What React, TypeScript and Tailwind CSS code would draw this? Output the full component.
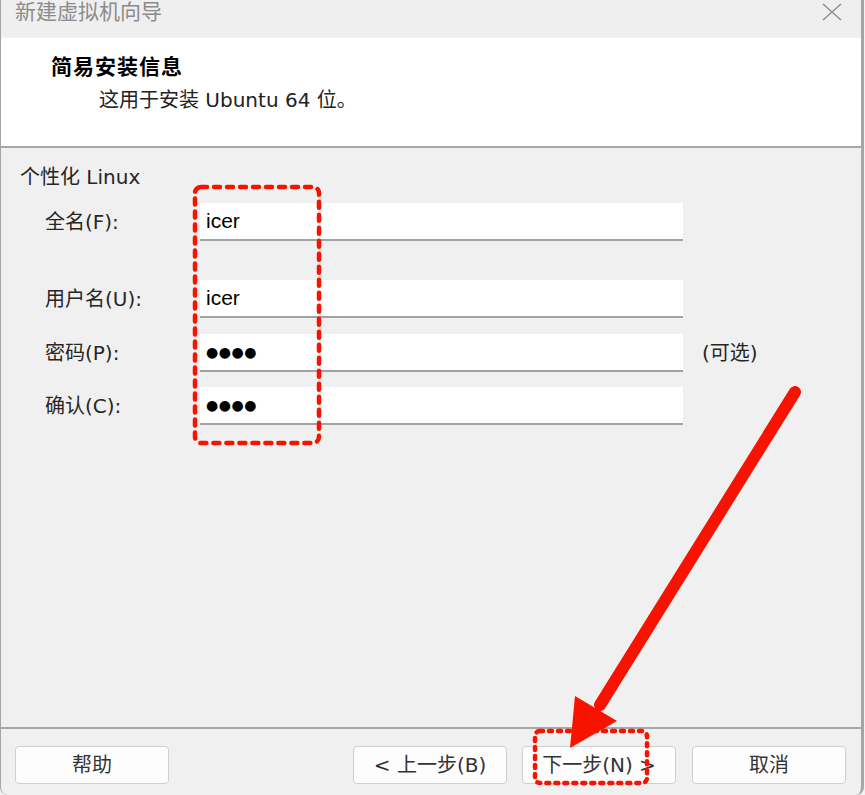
const SANS = { fontFamily: '"DejaVu Sans", "Noto Sans CJK SC", sans-serif' };

function Field({ label, value, masked, hint, className }: { label: string; value: string; masked?: boolean; hint?: string; className?: string }) {
  return (
    <div className={`flex items-center ${className ?? ""}`}>
      <span className="w-[180px] pl-[25px] text-[20px] leading-[26px] text-[#262626]">{label}</span>
      <div className="w-[483px] h-[38px] bg-white border-b-2 border-[#a2a2a2] flex items-center pl-[6px]">
        {masked ? (
          <span className="text-[14px] tracking-[0.5px] text-black">{value}</span>
        ) : (
          <span className="text-[21px] text-black" style={{ fontFamily: '"Liberation Sans", sans-serif' }}>
            {value}
          </span>
        )}
      </div>
      {hint && <span className="ml-[19px] text-[20px] text-[#262626]">{hint}</span>}
    </div>
  );
}

function Btn({ text }: { text: string }) {
  return (
    <button className="w-[154px] h-[38px] bg-[#fdfdfd] border border-[#cfcfcf] rounded-[4px] text-[20px] text-[#333] flex items-center justify-center">
      {text}
    </button>
  );
}

export default function App() {
  return (
    <div className="relative w-[865px] h-[795px] bg-[#f0f0f0]" style={SANS}>
      <div className="flex flex-col h-full w-[864px] border-l border-r-[3px] border-[#a5a5a5] rounded-b-[8px] bg-[#f0f0f0] overflow-hidden">
        {/* title bar */}
        <div className="h-[38px] shrink-0 flex items-start justify-between bg-[#efefef] pl-[14px] pr-[19px]">
          <span className="text-[21px] leading-[24px] text-[#8b8b8b]">新建虚拟机向导</span>
          <svg className="mt-[3px]" width="20" height="18" viewBox="0 0 20 18">
            <path d="M1 1 L19 17 M19 1 L1 17" stroke="#8b8b8b" strokeWidth="1.4" fill="none" />
          </svg>
        </div>

        {/* header */}
        <div className="h-[110px] shrink-0 bg-white border-b-2 border-[#a8a8a8] pt-[15px]">
          <div className="pl-[50px] text-[21px] leading-[28px] font-bold tracking-[1px] text-black">简易安装信息</div>
          <div className="pl-[98px] mt-[6px] text-[20px] leading-[26px] text-[#222]">这用于安装 Ubuntu 64 位。</div>
        </div>

        {/* body */}
        <div className="flex-1 pt-[16px] pl-[19px]">
          <div className="text-[20px] leading-[26px] text-[#262626]">个性化 Linux</div>
          <Field className="mt-[13px]" label="全名(F):" value="icer" />
          <Field className="mt-[39px]" label="用户名(U):" value="icer" />
          <Field className="mt-[16px]" label="密码(P):" value="●●●●" masked hint="(可选)" />
          <Field className="mt-[15px]" label="确认(C):" value="●●●●" masked />
        </div>

        {/* footer */}
        <div className="h-[68px] shrink-0 border-t-2 border-[#a8a8a8] flex items-start pt-[17px] pl-[14px]">
          <Btn text="帮助" />
          <div className="ml-[184px] flex gap-[15px]">
            <Btn text="< 上一步(B)" />
            <Btn text="下一步(N) >" />
            <div className="ml-[1px]">
              <Btn text="取消" />
            </div>
          </div>
        </div>
      </div>

      {/* red annotations */}
      <svg className="absolute inset-0 pointer-events-none" width="865" height="795" viewBox="0 0 865 795">
        <rect x="195" y="187" width="124" height="256" rx="6" fill="none" stroke="#f81200" strokeWidth="4.5" strokeDasharray="6 7" strokeLinecap="round" />
        <rect x="535" y="731" width="112" height="52" rx="5" fill="none" stroke="#f81200" strokeWidth="4.5" strokeDasharray="3 6" strokeLinecap="round" />
        <line x1="795" y1="392" x2="600" y2="705" stroke="#f81200" strokeWidth="12" strokeLinecap="round" />
        <polygon points="570,748 575,696 617,721" fill="#f81200" />
      </svg>
    </div>
  );
}
